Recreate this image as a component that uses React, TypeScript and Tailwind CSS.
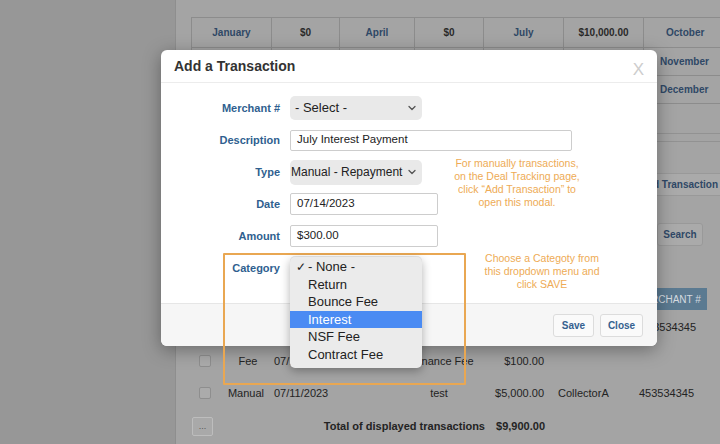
import React from 'react';

const months = [
  { m: 'January', v: '$0' },
  { m: 'April', v: '$0' },
  { m: 'July', v: '$10,000.00' },
];

const categories = ['- None -', 'Return', 'Bounce Fee', 'Interest', 'NSF Fee', 'Contract Fee'];

const Chevron = () => (
  <svg width="8" height="6" viewBox="0 0 8 6" className="shrink-0">
    <path d="M1 1.5 L4 4.5 L7 1.5" fill="none" stroke="#555" strokeWidth="1.3" strokeLinecap="round" strokeLinejoin="round" />
  </svg>
);

const Checkbox = () => <span className="block w-[12px] h-[12px] border border-[#8e8e8e] bg-[#ababab] rounded-[2px]" />;

const FormRow: React.FC<{ label: string; children?: React.ReactNode }> = ({ label, children }) => (
  <div className="flex items-center h-[32px]">
    <div className="w-[119px] text-right text-[11px] font-bold text-[#2f5f8f]">{label}</div>
    <div className="ml-[10px] flex items-center">{children}</div>
  </div>
);

const rowCols = 'grid grid-cols-[30px_50px_123px_90px_63px_82px_1fr] items-center';

export default function App() {
  return (
    <div className="relative w-[720px] h-[444px] overflow-hidden flex bg-[#a4a4a4] font-['Liberation_Sans',Arial,sans-serif] text-[#222]">
      {/* sidebar */}
      <div className="w-[176px] shrink-0 bg-[#979797] border-r border-[#8e8e8e]" />

      {/* page behind the modal */}
      <main className="flex-1 flex flex-col pl-[15px] pt-[17px] min-w-0">
        <div className="grid grid-cols-[80px_68px_75px_69px_80px_80px_90px] border-t border-l border-[#8c8c8c]">
          {months.map((c) => (
            <React.Fragment key={c.m}>
              <div className="h-[30px] flex items-center justify-center border-r border-b border-[#8c8c8c] text-[10px] font-bold text-[#2f4866]">{c.m}</div>
              <div className="h-[30px] flex items-center justify-center border-r border-b border-[#8c8c8c] text-[10px] font-bold text-[#2a2a2a]">{c.v}</div>
            </React.Fragment>
          ))}
          <div className="h-[30px] flex items-center pl-[22px] border-r border-b border-[#8c8c8c] text-[10px] font-bold text-[#2f4866]">October</div>
          {['November', 'December'].map((m) => (
            <React.Fragment key={m}>
              {Array.from({ length: 6 }).map((_, i) => (
                <div key={i} className="h-[28px] border-r border-b border-[#8c8c8c]" />
              ))}
              <div className="h-[28px] flex items-center pl-[16px] border-r border-b border-[#8c8c8c] text-[10px] font-bold text-[#2f4866]">{m}</div>
            </React.Fragment>
          ))}
        </div>
        <div className="h-[31px] border-b border-[#929292]" />
        <div className="h-[8px] border-b border-[#929292]" />

        <div className="flex justify-end mt-[31px] mr-[-7px]">
          <button className="h-[23px] px-[8px] bg-[#aaaaaa] border border-[#999] rounded-[3px] text-[10px] font-bold text-[#2f4866]">Add Transaction</button>
        </div>
        <div className="flex justify-end mt-[27px] mr-[17px]">
          <button className="h-[23px] w-[46px] bg-[#aaaaaa] border border-[#999] rounded-[3px] text-[10px] font-bold text-[#2f4866]">Search</button>
        </div>

        <div className={`mt-[42px] h-[22px] mr-[13px] bg-[#5b7a91] text-[10px] text-[#d5dbe0] uppercase ${rowCols}`}>
          <div />
          <div />
          <div />
          <div />
          <div />
          <div />
          <div className="pl-[7px] whitespace-nowrap">Merchant #</div>
        </div>

        <div className="flex flex-col text-[11px] text-[#232323]">
          <div className={`h-[35px] ${rowCols}`}>
            <div className="pl-2"><Checkbox /></div>
            <div />
            <div />
            <div />
            <div />
            <div />
            <div className="pl-[12px]">453534345</div>
          </div>
          <div className={`h-[32px] ${rowCols}`}>
            <div className="pl-2"><Checkbox /></div>
            <div className="text-center pl-[4px]">Fee</div>
            <div className="pl-[3px]">07/11/2023</div>
            <div className="text-center pl-[8px]">Finance Fee</div>
            <div className="text-right pr-[3px]">$100.00</div>
            <div />
            <div />
          </div>
          <div className={`h-[32px] ${rowCols}`}>
            <div className="pl-2"><Checkbox /></div>
            <div className="text-center">Manual</div>
            <div className="pl-[3px]">07/11/2023</div>
            <div className="text-center">test</div>
            <div className="text-right pr-[3px]">$5,000.00</div>
            <div className="pl-[11px]">CollectorA</div>
            <div className="pl-[10px]">453534345</div>
          </div>
          <div className="flex items-center h-[35px]">
            <button className="ml-[1px] w-[21px] h-[19px] border border-[#bdbdbd] bg-[#a9a9a9] rounded-[2px] text-[9px] leading-none text-[#555]">...</button>
            <div className="w-[272px] text-right font-bold">Total of displayed transactions</div>
            <div className="w-[60px] text-right font-bold">$9,900.00</div>
          </div>
        </div>
      </main>

      {/* modal */}
      <div className="absolute left-[161px] top-[50px] w-[496px] h-[296px] bg-white rounded-[6px] shadow-[0_4px_18px_rgba(0,0,0,0.35)] flex flex-col overflow-hidden">
        <div className="h-[33px] shrink-0 flex items-center justify-between pl-[13px] pr-[13px] border-b border-[#ececec]">
          <span className="text-[14px] font-bold text-[#333]">Add a Transaction</span>
          <span className="text-[17px] text-[#cdcdcd] mt-[7px]">X</span>
        </div>
        <div className="flex-1 flex flex-col pt-[9px]">
          <FormRow label="Merchant #">
            <div className="w-[132px] h-[24px] bg-[#e9e9e9] rounded-[5px] flex items-center justify-between pl-[5px] pr-[6px] text-[13px]">
              <span>- Select -</span>
              <Chevron />
            </div>
          </FormRow>
          <FormRow label="Description">
            <div className="w-[282px] h-[21px] border border-[#cdcdcd] rounded-[2px] flex items-center pl-[6px] text-[11.5px]">July Interest Payment</div>
          </FormRow>
          <FormRow label="Type">
            <div className="w-[132px] h-[25px] bg-[#e9e9e9] rounded-[5px] flex items-center justify-between pl-[1px] pr-[6px] text-[12px] whitespace-nowrap">
              <span>Manual - Repayment</span>
              <Chevron />
            </div>
          </FormRow>
          <FormRow label="Date">
            <div className="w-[148px] h-[22px] border border-[#cdcdcd] rounded-[2px] flex items-center pl-[6px] text-[11.5px]">07/14/2023</div>
          </FormRow>
          <FormRow label="Amount">
            <div className="w-[148px] h-[22px] border border-[#cdcdcd] rounded-[2px] flex items-center pl-[6px] text-[11.5px]">$300.00</div>
          </FormRow>
          <FormRow label="Category">
            <div className="w-[132px] h-[24px] bg-[#e9e9e9] rounded-[5px]" />
          </FormRow>
        </div>
        <div className="h-[43px] shrink-0 bg-[#f6f6f6] border-t border-[#e6e6e6] flex items-center justify-end gap-[6px] pr-[14px]">
          <button className="w-[41px] h-[23px] bg-[#fafafa] border border-[#dcdcdc] rounded-[3px] text-[10px] font-bold text-[#35618f]">Save</button>
          <button className="w-[43px] h-[23px] bg-[#fafafa] border border-[#dcdcdc] rounded-[3px] text-[10px] font-bold text-[#35618f]">Close</button>
        </div>
      </div>

      {/* annotations */}
      <div className="absolute left-[437px] top-[157px] w-[160px] text-center text-[10.5px] leading-[13px] text-[#eeab55] whitespace-nowrap">
        For manually transactions,<br />on the Deal Tracking page,<br />click “Add Transaction” to<br />open this modal.
      </div>
      <div className="absolute left-[467px] top-[252px] w-[150px] text-center text-[10.5px] leading-[13px] text-[#eeab55] whitespace-nowrap">
        Choose a Categoty from<br />this dropdown menu and<br />click SAVE
      </div>
      <div className="absolute left-[223px] top-[253px] w-[243px] h-[132px] border-2 border-[#e9a752] rounded-[1px]" />

      {/* native dropdown */}
      <div className="absolute left-[290px] top-[257px] w-[132px] h-[111px] bg-[#ebebeb] rounded-[5px] shadow-[0_3px_10px_rgba(0,0,0,0.3)] pt-[1px] overflow-hidden">
        {categories.map((c, i) => (
          <div
            key={c}
            className={`relative h-[17.6px] flex items-center pl-[18px] text-[13px] ${i === 3 ? 'bg-[#4a8bf3] text-white' : 'text-[#222]'}`}
          >
            {i === 0 && <span className="absolute left-[6px] text-[12px]">✓</span>}
            {c}
          </div>
        ))}
      </div>
    </div>
  );
}
